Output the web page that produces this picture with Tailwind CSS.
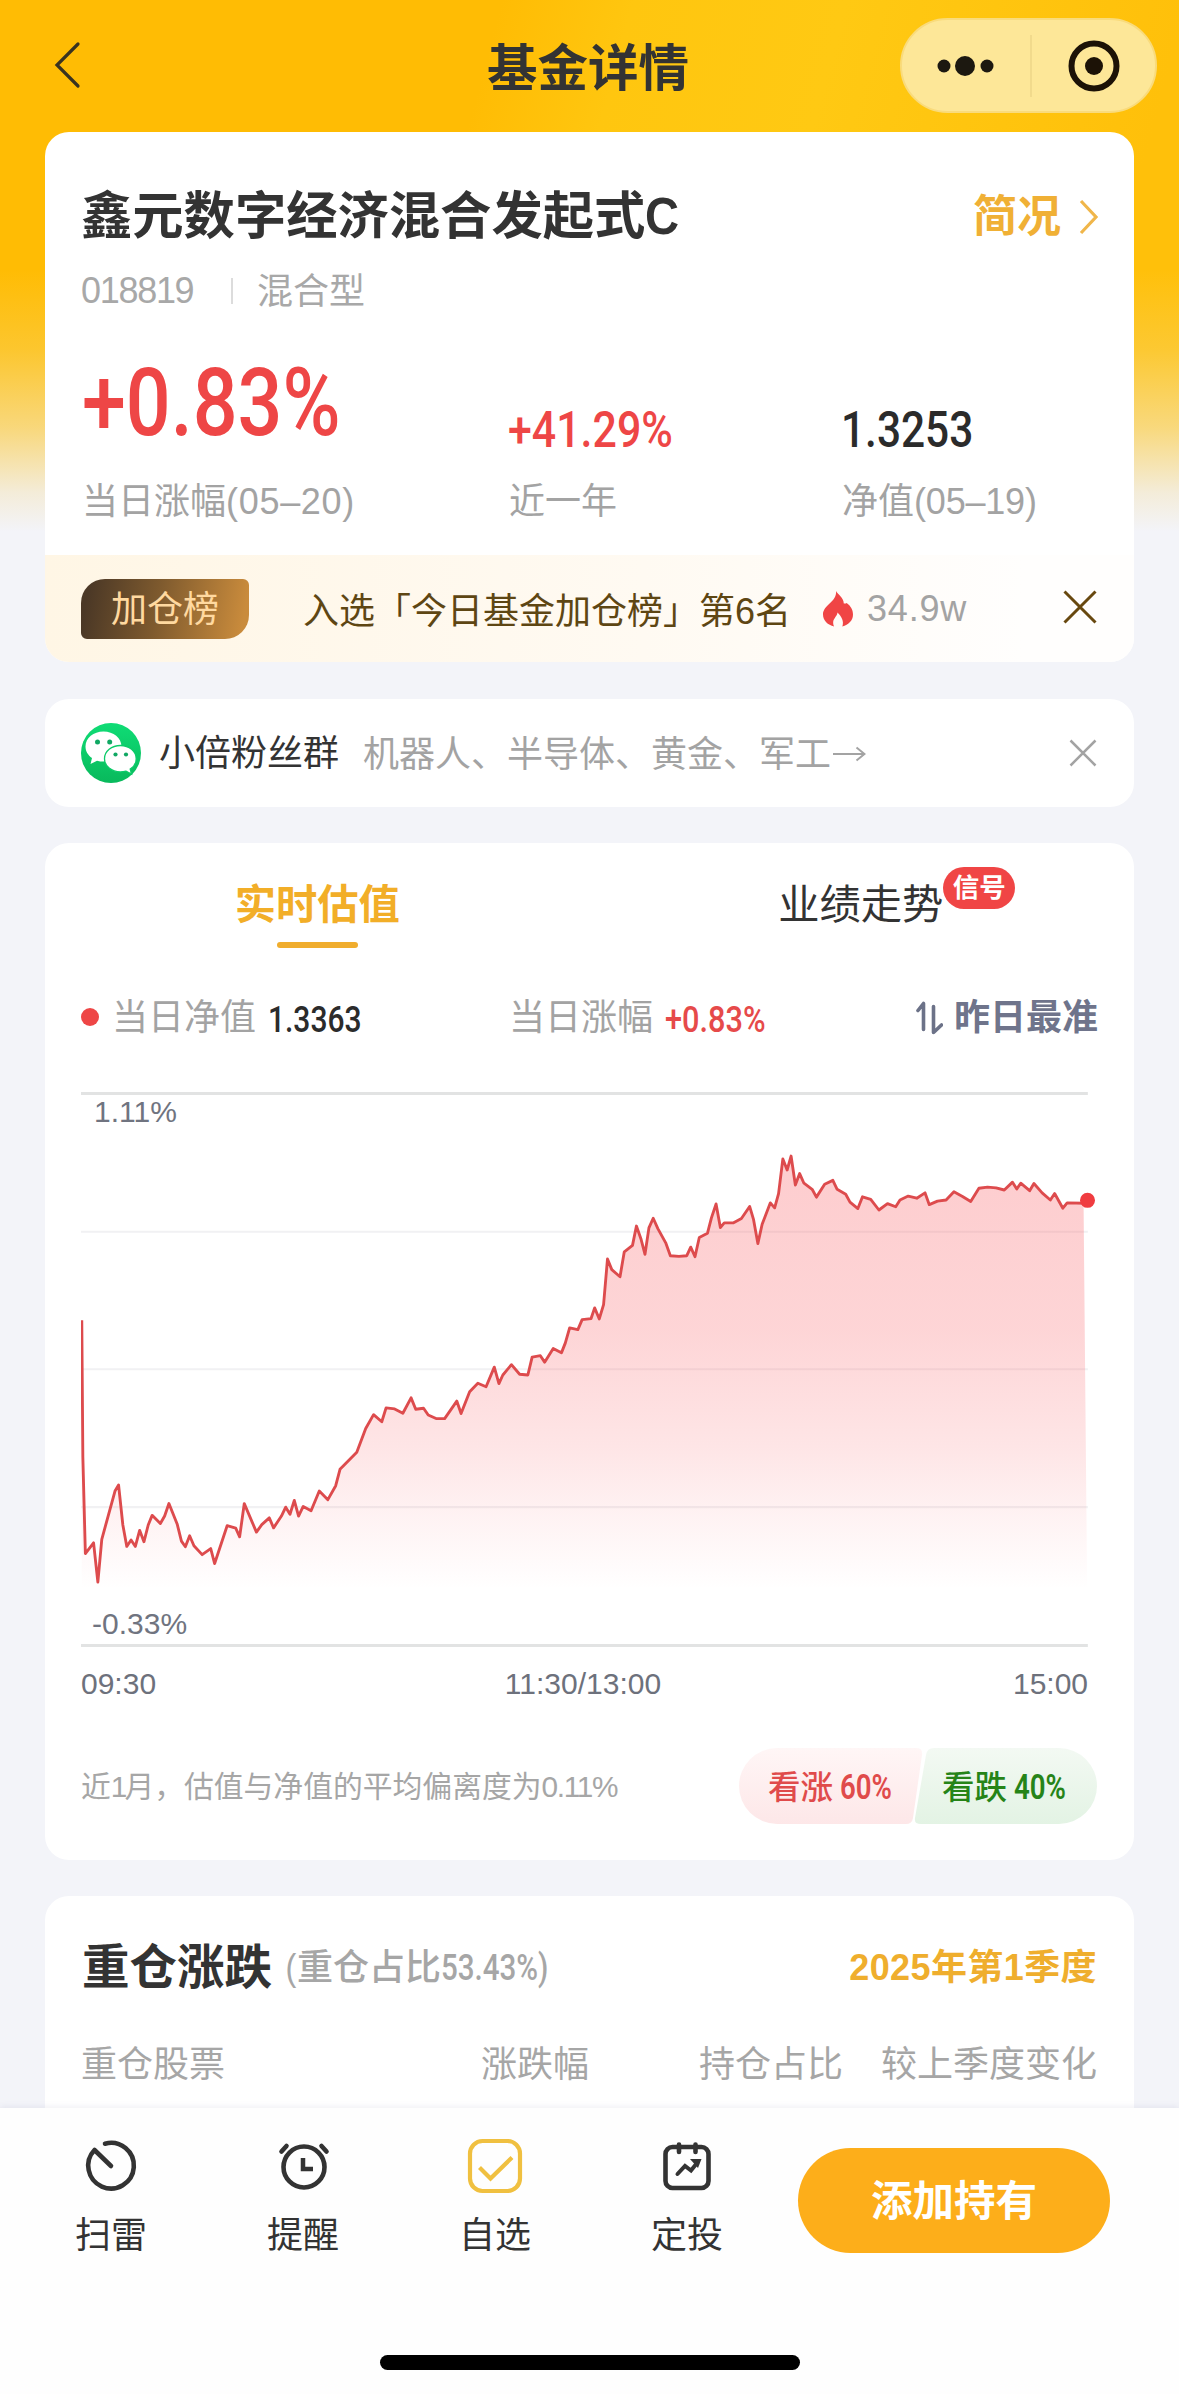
<!DOCTYPE html>
<html lang="zh-CN">
<head>
<meta charset="utf-8">
<title>基金详情</title>
<script src="https://cdn.jsdelivr.net/npm/@tailwindcss/browser@4"></script>
</head>
<body class="w-[1179px] h-[2394px] overflow-hidden bg-[#f3f4f9] font-['Liberation_Sans','Noto_Sans_CJK_SC',sans-serif] text-[36px] text-[#333]">
<div class="relative flex h-[2394px] flex-col">
  <!-- top backdrop -->
  <div class="absolute inset-x-0 top-0 h-[530px] bg-[linear-gradient(105deg,#ffbc04_38%,#ffc60f_48%,#ffc913_64%,#ffc00a_90%)]"></div>
  <div class="absolute inset-x-0 top-[270px] h-[262px] bg-[linear-gradient(180deg,#f3f4f900_0%,#f8d56c66_30%,#f6e2a8b8_60%,#f3efe6f0_85%,#f3f4f9_100%)]"></div>

  <!-- nav bar -->
  <header class="relative flex h-[132px] shrink-0 items-start">
    <svg class="mt-[40px] ml-[50px] h-[50px] w-[34px]" viewBox="0 0 34 50" fill="none" stroke="#3a3320" stroke-width="3.2" stroke-linecap="round"><path d="M28 4 7 25l21 21"/></svg>
    <h1 class="mt-[39px] flex-1 pl-[403px] text-[50.500px] leading-[60px] font-bold">基金详情</h1>
    <div class="mt-[18px] mr-[22px] flex h-[95px] w-[257px] items-center rounded-full border-2 border-[#f9db7c] bg-[#fde798]">
      <svg class="h-[60px] w-[128px]" viewBox="0 0 128 60" fill="#1c1810"><circle cx="42" cy="30" r="6.5"/><circle cx="63" cy="30" r="10"/><circle cx="85" cy="30" r="6.5"/></svg>
      <div class="h-[62px] w-[2px] bg-[#f1da8c]"></div>
      <svg class="h-[60px] w-[122px]" viewBox="0 0 122 60"><circle cx="62" cy="30" r="22.5" fill="none" stroke="#1c1206" stroke-width="6"/><circle cx="62" cy="30" r="9" fill="#1c1206"/></svg>
    </div>
  </header>

  <!-- fund summary -->
  <section class="relative mx-[45px] flex h-[530px] shrink-0 flex-col overflow-hidden rounded-[24px] bg-white">
    <div class="mt-[55px] flex h-[60px] items-center justify-between pr-[35px] pl-[36px]">
      <h2 class="text-[51.3px] leading-[60px] font-bold whitespace-nowrap">鑫元数字经济混合发起式<span class="inline-block origin-left scale-x-92">C</span></h2>
      <div class="flex items-center gap-[18px] text-[44px] leading-[60px] font-bold text-[#f0b035]">简况
        <svg class="h-[40px] w-[20px]" viewBox="0 0 20 40" fill="none" stroke="#f0b64a" stroke-width="3.2"><path d="m2 4 15 16L2 36"/></svg>
      </div>
    </div>
    <div class="mt-[22px] flex h-[44px] items-center pl-[36px] leading-[44px] text-[#a8a8a8]">
      <span class="w-[150px] tracking-[-1.3px]">018819</span>
      <span class="h-[26px] w-[2px] bg-[#dcdcdc]"></span>
      <span class="mt-[2px] ml-[24px]">混合型</span>
    </div>
    <div class="mt-[35px] flex h-[110px] items-start font-[Roboto] leading-[110px] font-medium text-[#ee4646]">
      <span class="w-[428px] pl-[37px]"><span class="inline-block origin-left scale-x-84 text-[94px]">+0.83%</span></span>
      <span class="w-[333px] pt-[27px] pl-[35px]"><span class="inline-block origin-left scale-x-85 text-[50.5px]">+41.29%</span></span>
      <span class="pt-[27px] pl-[35px] text-[#2b2b2b]"><span class="inline-block origin-left scale-x-84 text-[50.5px]">1.3253</span></span>
    </div>
    <div class="mt-[22px] flex h-[44px] items-center pl-[37px] leading-[44px] text-[#a3a3a3]">
      <span class="w-[427px]">当日涨幅<span class="tracking-[0.7px]">(05–20)</span></span>
      <span class="w-[333px]">近一年</span>
      <span>净值<span class="tracking-[-0.2px]">(05–19)</span></span>
    </div>
    <div class="mt-auto flex h-[107px] items-center bg-[linear-gradient(90deg,#fff6e5_0%,#fffaf2_55%,#fffefd_90%)] pr-[37px] pl-[36px] text-[#5e4613]">
      <span class="flex h-[60px] w-[168px] items-center justify-center rounded-tl-[24px] rounded-tr-[6px] rounded-br-[24px] rounded-bl-[6px] bg-[linear-gradient(100deg,#4b3826_5%,#7e5a2e_45%,#c98b3c_95%)] pt-[2px] leading-[44px] text-[#ffd9a0]">加仓榜</span>
      <span class="ml-[54px] mt-[7px] leading-[44px] whitespace-nowrap">入选「今日基金加仓榜」第6名</span>
      <svg class="ml-[32px] h-[36px] w-[30px]" viewBox="0 0 31 36" preserveAspectRatio="none" fill="#f04545"><path d="M13.500 0c1.500 3 8 6.500 8 12.500 1.400.2 2.200 0 3-.5C28.500 15 31 18.500 31 23.500c0 6-4.500 10-11 12 2-5.500-1-10-5-14-.5 4-4.500 6-4.500 10 0 2 .5 3 1 4C5 34 0 29.500 0 23.500 0 14 14.500 11 13.500 0z"/></svg>
      <span class="ml-[14px] leading-[44px] tracking-[0.8px] text-[#a3a3a3]">34.9w</span>
      <svg class="mb-[4px] ml-auto h-[34px] w-[34px]" viewBox="0 0 34 34" fill="none" stroke="#68480f" stroke-width="3"><path d="m1.500 1.500 31 31m0-31-31 31"/></svg>
    </div>
  </section>

  <!-- group entry -->
  <section class="relative mx-[45px] mt-[37px] flex h-[108px] shrink-0 items-center rounded-[24px] bg-white pr-[37px] pl-[36px] leading-[44px]">
    <svg class="h-[60px] w-[60px]" viewBox="0 0 60 60">
      <defs><linearGradient id="wc" x1="0" y1="0" x2="0" y2="1"><stop offset="0" stop-color="#0fdc75"/><stop offset="1" stop-color="#09b95c"/></linearGradient></defs>
      <circle cx="30" cy="30" r="30" fill="url(#wc)"/>
      <path fill="#fff" d="M22.500 8.500C12.500 8.500 4.500 15 4.500 23.500c0 4.700 2.400 8.700 6.500 11.500l-1.500 6 6.500-3.300c2 .5 4.300.9 6.500.9 10 0 18-6.600 18-15.100s-8-15-18-15z"/>
      <path fill="#fff" stroke="#0ccb69" stroke-width="1.300" d="M39.500 22.500c-9 0-16 5.800-16 13.200s7 13.200 16 13.200c2 0 3.800-.3 5.500-.8l5.500 2.900-1.300-4.900c4-2.500 6-6 6-10.400 0-7.400-7-13.200-15.700-13.200z"/>
      <g fill="#10a863"><circle cx="16.500" cy="19" r="2.500"/><circle cx="28.700" cy="19" r="2.500"/><circle cx="34.500" cy="31.500" r="2.100"/><circle cx="45" cy="31.500" r="2.100"/></g>
    </svg>
    <span class="ml-[18px] mt-[1px]">小倍粉丝群</span>
    <span class="ml-[24px] mt-[4px] flex items-center text-[#a3a3a3]">机器人、半导体、黄金、军工
      <svg class="mt-[-3px] ml-[2px] h-[16px] w-[33px]" viewBox="0 0 33 16" fill="none" stroke="#a3a3a3" stroke-width="2"><path d="M0 8h31M23.500 1.500 31.500 8l-8 6.500"/></svg>
    </span>
    <svg class="ml-auto h-[28px] w-[28px]" viewBox="0 0 28 28" fill="none" stroke="#a3a3a3" stroke-width="2.500"><path d="m1.500 1.500 25 25m0-25-25 25"/></svg>
  </section>

  <!-- intraday estimate -->
  <section class="relative mx-[45px] mt-[36px] flex h-[1017px] shrink-0 flex-col rounded-[24px] bg-white">
    <div class="flex h-[105px] text-[41.3px] leading-[50px]">
      <div class="flex w-1/2 flex-col items-center">
        <span class="mt-[37px] font-bold text-[#f2ae28]">实时估值</span>
        <span class="mt-[12px] h-[6px] w-[81px] rounded-full bg-[#f0ad2d]"></span>
      </div>
      <div class="flex w-1/2 justify-center">
        <span class="relative mt-[37px] mr-[2px] h-[50px]">业绩走势
          <span class="absolute top-[-13px] left-[165px] flex h-[42px] w-[72px] items-center justify-center rounded-full bg-[#f04545] text-[26.5px] leading-[36px] font-bold text-white">信号</span>
        </span>
      </div>
    </div>
    <div class="mt-[48px] flex h-[44px] items-center pr-[36px] pl-[36px] leading-[44px] text-[#a3a3a3]">
      <span class="mb-[2px] h-[18px] w-[18px] rounded-full bg-[#ee4646]"></span>
      <span class="ml-[13px]">当日净值</span>
      <span class="mt-[3px] ml-[12px] w-[241px]"><span class="inline-block origin-left scale-x-81 font-[Roboto] text-[37px] font-medium text-[#2b2b2b]">1.3363</span></span>
      <span>当日涨幅</span>
      <span class="mt-[3px] ml-[12px]"><span class="inline-block origin-left scale-x-83 font-[Roboto] text-[37px] font-medium text-[#e64a4a]">+0.83%</span></span>
      <svg class="ml-auto h-[34px] w-[27px]" viewBox="0 0 27 34" fill="none" stroke="#6c7288" stroke-width="3.600" stroke-linejoin="round" stroke-linecap="round"><path d="M2 9.500 7.500 2.500v26M17.500 5.500v26l8-7.500"/></svg>
      <span class="ml-[11px] font-bold text-[#6f748b]">昨日最准</span>
    </div>
    <!-- chart -->
    <div class="relative mt-[52px] ml-[36px] h-[555px] w-[1020px] text-[30px] leading-[34px] text-[#707480]">
      <svg class="h-[555px] w-[1020px]" viewBox="58.8 -22.4 2856 1554" fill="none">
        <defs><linearGradient id="area" gradientUnits="userSpaceOnUse" x1="0" y1="158" x2="0" y2="1370">
          <stop offset="0" stop-color="#f9565c" stop-opacity=".3"/><stop offset=".4" stop-color="#f9565c" stop-opacity=".25"/><stop offset=".68" stop-color="#f9565c" stop-opacity=".15"/><stop offset=".85" stop-color="#f9565c" stop-opacity=".065"/><stop offset="1" stop-color="#f9565c" stop-opacity="0"/></linearGradient></defs>
        <path stroke="#e2e3e3" stroke-width="8.400" d="M58.800-18.200H2878M58.800 1527.400H2878"/>
        <path stroke="#f1f1f3" stroke-width="6" d="M58.800 369H2878M58.800 754H2878M58.800 1140H2878"/>
        <path fill="url(#area)" d="M61 617 64 1000 71 1270 94 1240 106 1350 117 1230 154 1095 164 1078 176 1190 187 1250 199 1232 211 1250 223 1205 235 1237 247 1190 258 1163 281 1186 293 1165 305 1130 328 1187 340 1235 351 1251 363 1220 375 1248 398 1273 422 1256 433 1298 468 1192 492 1199 503 1223 516 1130 550 1210 565 1189 586 1170 598 1198 620 1165 632 1140 644 1160 656 1121 668 1165 681 1138 703 1150 726 1095 750 1119 772 1080 784 1034 831 986 856 920 878 881 901 901 913 862 937 865 960 877 983 834 996 866 1018 863 1031 882 1053 892 1077 892 1111 843 1123 878 1147 817 1170 793 1193 803 1216 748 1229 794 1240 770 1264 741 1287 768 1310 770 1322 720 1345 716 1357 734 1381 696 1404 708 1415 680 1427 638 1450 643 1462 615 1487 612 1497 582 1510 613 1522 573 1533 445 1545 475 1568 495 1580 425 1603 407 1614 353 1627 390 1638 432 1649 358 1661 331 1674 360 1696 400 1709 436 1733 438 1755 436 1766 412 1778 439 1790 385 1813 373 1824 330 1837 291 1849 357 1860 344 1886 344 1908 332 1931 298 1942 335 1954 402 1966 348 1989 288 2001 302 2012 262 2024 165 2036 196 2047 157 2059 238 2071 206 2083 233 2106 250 2118 272 2141 236 2164 225 2176 250 2200 264 2212 286 2234 304 2247 271 2270 278 2293 308 2317 290 2340 299 2352 280 2375 269 2399 275 2422 260 2434 293 2457 283 2481 280 2503 257 2527 270 2550 284 2573 247 2597 244 2621 246 2644 252 2667 230 2679 249 2690 233 2715 254 2727 234 2750 260 2773 280 2785 262 2808 303 2820 288 2866 289 2876 1370H61z"/>
        <path stroke="#dd4b4d" stroke-width="8" stroke-linejoin="round" d="M61 617 64 1000 71 1270 94 1240 106 1350 117 1230 154 1095 164 1078 176 1190 187 1250 199 1232 211 1250 223 1205 235 1237 247 1190 258 1163 281 1186 293 1165 305 1130 328 1187 340 1235 351 1251 363 1220 375 1248 398 1273 422 1256 433 1298 468 1192 492 1199 503 1223 516 1130 550 1210 565 1189 586 1170 598 1198 620 1165 632 1140 644 1160 656 1121 668 1165 681 1138 703 1150 726 1095 750 1119 772 1080 784 1034 831 986 856 920 878 881 901 901 913 862 937 865 960 877 983 834 996 866 1018 863 1031 882 1053 892 1077 892 1111 843 1123 878 1147 817 1170 793 1193 803 1216 748 1229 794 1240 770 1264 741 1287 768 1310 770 1322 720 1345 716 1357 734 1381 696 1404 708 1415 680 1427 638 1450 643 1462 615 1487 612 1497 582 1510 613 1522 573 1533 445 1545 475 1568 495 1580 425 1603 407 1614 353 1627 390 1638 432 1649 358 1661 331 1674 360 1696 400 1709 436 1733 438 1755 436 1766 412 1778 439 1790 385 1813 373 1824 330 1837 291 1849 357 1860 344 1886 344 1908 332 1931 298 1942 335 1954 402 1966 348 1989 288 2001 302 2012 262 2024 165 2036 196 2047 157 2059 238 2071 206 2083 233 2106 250 2118 272 2141 236 2164 225 2176 250 2200 264 2212 286 2234 304 2247 271 2270 278 2293 308 2317 290 2340 299 2352 280 2375 269 2399 275 2422 260 2434 293 2457 283 2481 280 2503 257 2527 270 2550 284 2573 247 2597 244 2621 246 2644 252 2667 230 2679 249 2690 233 2715 254 2727 234 2750 260 2773 280 2785 262 2808 303 2820 288 2870 289"/>
        <circle cx="2877" cy="281" r="21" fill="#f03c40"/>
      </svg>
      <span class="absolute top-[3px] left-[13px]">1.11%</span>
      <span class="absolute top-[515px] left-[11px]">-0.33%</span>
    </div>
    <div class="mt-[20px] flex h-[34px] items-center justify-between pr-[46px] pl-[36px] text-[30px] leading-[34px] text-[#6d717c]">
      <span class="w-[80px]">09:30</span><span class="pr-[8px]">11:30/13:00</span><span class="w-[75px]">15:00</span>
    </div>
    <div class="mt-[47px] flex h-[76px] items-center justify-between pr-[37px] pl-[36px]">
      <span class="pt-[2px] text-[29.8px] leading-[40px] text-[#a6a6a6]">近<span class="tracking-[-3px]">1</span>月，估值与净值的平均偏离度为<span class="tracking-[-1.3px]">0.11%</span></span>
      <div class="relative flex h-[76px] w-[358px] items-center text-[32.500px] leading-[44px]">
        <svg class="absolute inset-0 h-[76px] w-[358px]" viewBox="0 0 358 76">
          <defs>
            <linearGradient id="up" x1="0" y1="0" x2="0" y2="1"><stop offset="0" stop-color="#fff6f6"/><stop offset="1" stop-color="#fde7e8"/></linearGradient>
            <linearGradient id="down" x1="0" y1="0" x2="0" y2="1"><stop offset="0" stop-color="#f3f9f3"/><stop offset="1" stop-color="#e3f3e4"/></linearGradient>
          </defs>
          <path fill="url(#up)" d="M38 0h139q7 0 6 7l-9 63q-1 6-7 6H38a38 38 0 0 1 0-76z"/>
          <path fill="url(#down)" d="M195 0h125a38 38 0 0 1 0 76H182q-7 0-6-6l11-63q1-7 8-7z"/>
        </svg>
        <span class="relative flex w-[175px] items-center pt-[3px] pl-[29px] font-medium text-[#e04b4b]">看涨<span class="ml-[7px] inline-block origin-left scale-x-79 font-[Roboto] text-[35px] font-semibold">60%</span></span>
        <span class="relative flex items-center pt-[3px] pl-[28px] font-medium text-[#268418]">看跌<span class="ml-[7px] inline-block origin-left scale-x-79 font-[Roboto] text-[35px] font-semibold">40%</span></span>
      </div>
    </div>
  </section>

  <!-- top holdings -->
  <section class="relative mx-[45px] mt-[36px] flex h-[212px] shrink-0 flex-col rounded-t-[24px] bg-white">
    <div class="mt-[42px] flex h-[60px] items-center pr-[37px] pl-[37px]">
      <h3 class="text-[47.500px] leading-[60px] font-bold whitespace-nowrap">重仓涨跌</h3>
      <span class="ml-[13px] flex items-center leading-[44px] font-medium whitespace-nowrap text-[#a6a6a6]"><span class="inline-block scale-x-90">(</span>重仓占比<span class="inline-block w-[110px] origin-left scale-x-82 font-[Roboto] text-[36px]">53.43%)</span></span>
      <span class="ml-auto leading-[44px] font-bold tracking-[0.4px] text-[#efae2d]">2025年第1季度</span>
    </div>
    <div class="mt-[45px] flex h-[44px] items-center pr-[37px] pl-[36px] leading-[44px] whitespace-nowrap text-[#a6a6a6]">
      <span class="w-[400px]">重仓股票</span><span class="w-[218px]">涨跌幅</span><span>持仓占比</span><span class="ml-auto">较上季度变化</span>
    </div>
  </section>

  <!-- action bar -->
  <footer class="relative flex flex-1 flex-col bg-[#fefefe] shadow-[0_-1px_6px_rgba(90,90,140,0.1)]">
    <div class="flex pt-[28px] pl-[15px] leading-[44px]">
      <div class="flex w-[192px] flex-col items-center gap-[18px]">
        <svg class="h-[60px] w-[60px]" viewBox="0 0 60 60" fill="none" stroke="#333" stroke-width="4.600" stroke-linecap="round" stroke-linejoin="round"><path d="M24 7.700A22.800 22.800 0 1 1 13.500 14L30 30"/></svg>
        <span>扫雷</span>
      </div>
      <div class="flex w-[192px] flex-col items-center gap-[18px]">
        <svg class="h-[60px] w-[60px]" viewBox="0 0 60 60" fill="none" stroke="#333" stroke-width="4.600" stroke-linecap="round"><circle cx="31" cy="31" r="20.500"/><path stroke-linecap="butt" stroke-width="4.500" d="M30 22v11h10"/><path d="m8.500 15.500 5-5.500M53.500 15.500 48.500 10"/></svg>
        <span>提醒</span>
      </div>
      <div class="flex w-[192px] flex-col items-center gap-[18px]">
        <svg class="h-[60px] w-[60px]" viewBox="0 0 60 60" fill="none" stroke="#f0c040" stroke-width="4.200"><rect x="5" y="5" width="50" height="50" rx="12.500"/><path d="m14.500 31.500 11 11L47 21.500"/></svg>
        <span>自选</span>
      </div>
      <div class="flex w-[192px] flex-col items-center gap-[18px]">
        <svg class="h-[60px] w-[60px]" viewBox="0 0 60 60" fill="none" stroke="#333" stroke-width="4.600"><rect x="8.500" y="11" width="43" height="41" rx="7"/><path stroke-linecap="round" d="M22 8.500v7.500M38.500 8.500v7.500"/><path stroke-width="4" stroke-linecap="round" d="m20.500 38 7.500-8 6 4.500 6-7.500"/><path fill="#333" stroke="none" d="M33 23h11.500l-3.500 9z"/></svg>
        <span>定投</span>
      </div>
      <button class="mt-[12px] ml-[15px] h-[105px] w-[312px] rounded-full bg-[#fdae1a] pt-[3px] text-[41.500px] leading-[50px] font-bold text-white">添加持有</button>
    </div>
    <div class="absolute top-[247px] left-[380px] h-[15px] w-[420px] rounded-full bg-black"></div>
  </footer>
</div>
</body>
</html>
